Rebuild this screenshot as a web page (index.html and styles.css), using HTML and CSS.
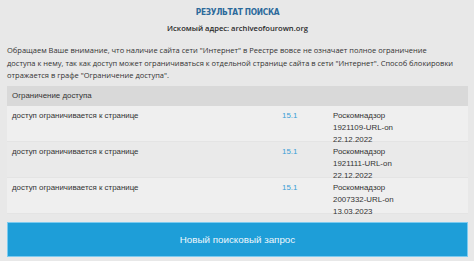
FILE: index.html
```html
<!DOCTYPE html>
<html lang="ru">
<head>
<meta charset="utf-8">
<link rel="stylesheet" href="styles.css">
</head>
<body>
<div class="page">
  <h1 class="title">РЕЗУЛЬТАТ ПОИСКА</h1>
  <div class="subtitle">Искомый адрес: archiveofourown.org</div>
  <p class="note">Обращаем Ваше внимание, что наличие сайта сети "Интернет" в Реестре вовсе не означает полное ограничение<br>доступа к нему, так как доступ может ограничиваться к отдельной странице сайта в сети "Интернет". Способ блокировки отражается в графе "Ограничение доступа".</p>
  <div class="table">
    <div class="thead">Ограничение доступа</div>
    <div class="row">
      <div class="c1">доступ ограничивается к странице</div>
      <div class="c2">15.1</div>
      <div class="c3">Роскомнадзор<br>1921109-URL-on<br>22.12.2022</div>
    </div>
    <div class="row alt">
      <div class="c1">доступ ограничивается к странице</div>
      <div class="c2">15.1</div>
      <div class="c3">Роскомнадзор<br>1921111-URL-on<br>22.12.2022</div>
    </div>
    <div class="row">
      <div class="c1">доступ ограничивается к странице</div>
      <div class="c2">15.1</div>
      <div class="c3">Роскомнадзор<br>2007332-URL-on<br>13.03.2023</div>
    </div>
  </div>
  <button class="btn">Новый поисковый запрос</button>
</div>
</body>
</html>
```
FILE: styles.css
```css
html, body { margin: 0; padding: 0; }
body { background: #e8e8e8; width: 474px; height: 261px; overflow: hidden; }
.page { padding: 5px 6px 0 7px; display: flex; flex-direction: column; }
.title {
  margin: 0; text-align: center; font-family: "DejaVu Sans Condensed", "DejaVu Sans", sans-serif;
  font-stretch: condensed; font-weight: bold; font-size: 8.3px; letter-spacing: -0.3px; color: #2c6a9b; line-height: 14px;
}
.subtitle {
  text-align: center; font-family: "Open Sans", sans-serif; font-weight: 600; font-size: 7.6px;
  color: #2a2a2a; line-height: 14px; margin-top: 2px;
}
.note {
  margin: 9px 0 0 0; font-family: "Open Sans", sans-serif; font-size: 7.5px; line-height: 12.5px; color: #333;
}
.table { margin-top: 4px; font-family: "Liberation Sans", Arial, sans-serif; font-size: 7.9px; color: #333; }
.thead { background: #d9d9d9; height: 20px; line-height: 20px; padding-left: 5px; }
.row { display: flex; background: #efefef; padding: 4px 0 0 0; line-height: 12.3px; height: 31px; border-bottom: 1px solid #e4e4e4; }
.row.alt { background: #eaeaea; }
.c1 { width: 270px; padding-left: 5px; }
.c2 { width: 51px; color: #3a9fd6; }
.c3 { flex: 1; }
.btn {
  margin-top: 8px; height: 35px; background: #1e9ed8; border: 1px solid #7ccbf0; color: #eef7fc;
  font-family: "Liberation Sans", Arial, sans-serif; font-size: 9.8px; width: 461px; padding: 0;
}
```
